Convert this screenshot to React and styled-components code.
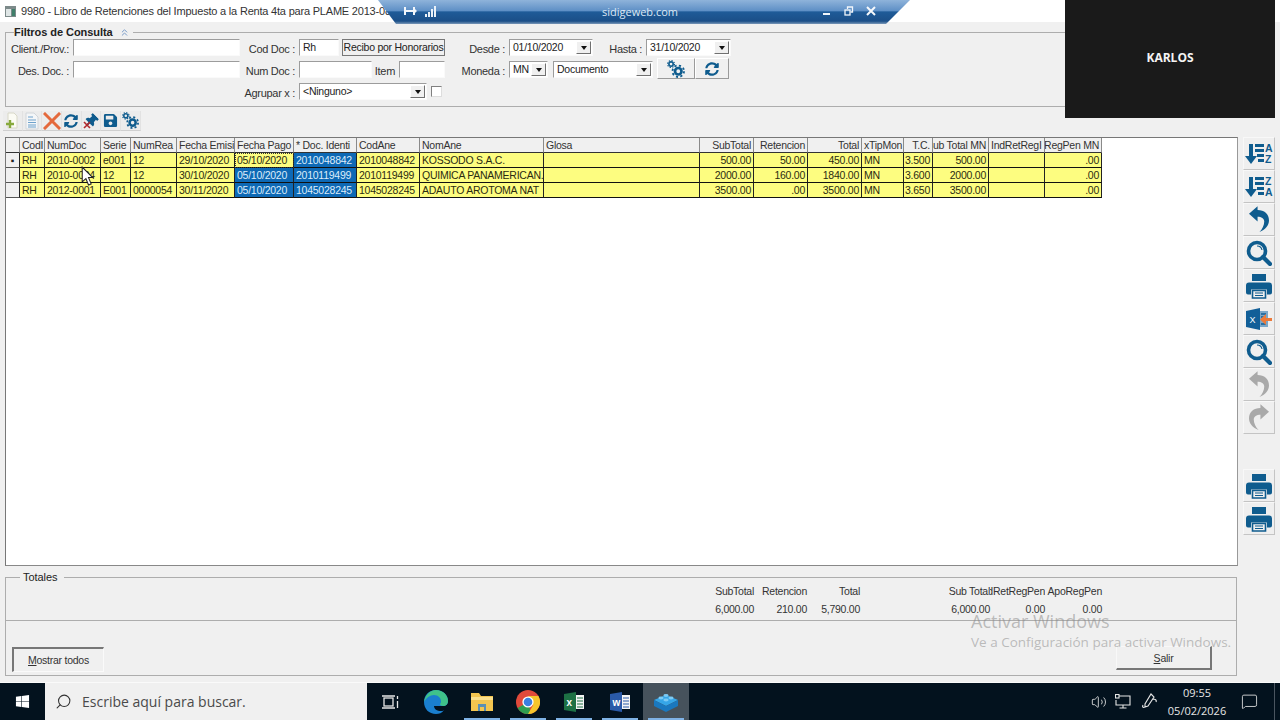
import React from 'react';
import styled, { createGlobalStyle } from 'styled-components';
import { FaSave, FaSyncAlt, FaThumbtack, FaWindows } from 'react-icons/fa';
import { Volume2, MessageSquare, Search, ChevronsUp } from 'lucide-react';

const BLUE = '#0f5c8e';

const GlobalStyle = createGlobalStyle`
  html, body { margin: 0; padding: 0; background: #f0f0f0; }
  * { box-sizing: border-box; }
  body { font-family: "Liberation Sans", Arial, sans-serif; font-size: 10.5px; letter-spacing: -0.25px; color: #222; }
`;

const Page = styled.div`
  position: relative;
  width: 1280px;
  height: 720px;
  overflow: hidden;
  display: flex;
  flex-direction: column;
`;

const TitleBar = styled.div`
  height: 22px;
  flex: none;
  background: #fff;
  display: flex;
  align-items: center;
  gap: 5px;
  padding-left: 5px;
  font-size: 11px;
  letter-spacing: -0.2px;
  color: #333;
  white-space: nowrap;
`;

const RemoteBar = styled.div`
  position: absolute;
  left: 378px;
  top: 0;
  width: 532px;
  height: 24px;
  clip-path: polygon(0 0, 100% 0, calc(100% - 24px) 100%, 18px 100%);
  background: linear-gradient(#8fb3da 0, #5f90c6 44%, #1f5b98 50%, #1b4f88 88%, #7a98b8 100%);
  display: grid;
  grid-template-columns: 1fr auto 1fr;
  align-items: center;
  padding: 0 34px 2px 26px;
  color: #dce8f4;
  font-family: "Open Sans", sans-serif;
  font-size: 11px;
  letter-spacing: 0;
`;

const RemoteGroup = styled.div`
  display: flex;
  align-items: center;
  gap: ${(p) => p.$gap}px;
  justify-content: ${(p) => (p.$end ? 'flex-end' : 'flex-start')};
`;

const VideoTile = styled.div`
  position: absolute;
  left: 1065px;
  top: 0;
  width: 210px;
  height: 118px;
  padding-bottom: 4px;
  background: #1a1a1a;
  color: #f4f4f4;
  font-family: "Open Sans", sans-serif;
  font-weight: 700;
  font-size: 12px;
  letter-spacing: 0;
  display: flex;
  align-items: center;
  justify-content: center;
`;

const Body = styled.div`
  flex: 1;
  min-height: 0;
  padding-left: 5px;
`;

const GroupBox = styled.fieldset`
  margin: ${(p) => p.$top}px 0 0;
  padding: 0;
  width: ${(p) => p.$width}px;
  border: 1px solid #adadad;
  min-width: 0;
`;

const GroupLegend = styled.legend`
  margin-left: ${(p) => p.$indent}px;
  padding: 0 3px 0 0;
  line-height: 14px;
  display: flex;
  align-items: center;
  gap: 6px;
  font-size: 11px;
  letter-spacing: -0.05px;
  font-weight: ${(p) => (p.$bold ? 700 : 400)};
`;

const FormRows = styled.div`
  display: flex;
  flex-direction: column;
  gap: 5px;
  padding-bottom: 6px;
`;

const FormRow = styled.div`
  display: flex;
  align-items: stretch;
  height: 17px;
`;

const FieldLabel = styled.label`
  width: ${(p) => p.$w}px;
  margin-right: 4px;
  text-align: right;
  line-height: 20px;
  font-size: 11px;
  letter-spacing: -0.3px;
  color: #333;
  white-space: nowrap;
`;

const TextField = styled.div`
  width: ${(p) => p.$w}px;
  background: #fff;
  border: 1px solid;
  border-color: #9c9c9c #fafafa #fafafa #9c9c9c;
  padding-left: 3px;
  line-height: 15px;
  margin-left: ${(p) => p.$ml || 0}px;
  display: flex;
  justify-content: space-between;
  align-items: center;
  white-space: nowrap;
`;

const DropArrow = styled.span`
  width: 15px;
  height: 13px;
  margin-right: 1px;
  flex: none;
  background: #f0f0f0;
  border: 1px solid;
  border-color: #fff #707070 #707070 #fff;
  display: flex;
  align-items: center;
  justify-content: center;
  &::after {
    content: '';
    border-left: 3.5px solid transparent;
    border-right: 3.5px solid transparent;
    border-top: 4px solid #111;
  }
`;

const DocButton = styled.div`
  width: 103px;
  margin-left: 3px;
  border: 1px solid #777;
  background: #f0f0f0;
  line-height: 14px;
  text-align: center;
  white-space: nowrap;
  overflow: hidden;
`;

const CheckBox = styled.span`
  width: 11px;
  height: 11px;
  margin: 3px 0 0 4px;
  background: #fff;
  border: 1px solid;
  border-color: #808080 #ddd #ddd #808080;
`;

const ActionButton = styled.div`
  width: ${(p) => p.$w}px;
  height: 21px;
  margin: -3px 0 0 ${(p) => p.$ml}px;
  background: #f0f0f0;
  border: 1px solid;
  border-color: #fff #9a9a9a #9a9a9a #fff;
  display: flex;
  align-items: center;
  justify-content: center;
  color: ${BLUE};
`;

const Toolbar = styled.div`
  display: flex;
  height: 20px;
  margin: 4px 0 6px -2px;
`;

const ToolButton = styled.div`
  width: 19.7px;
  height: 20px;
  display: flex;
  align-items: center;
  justify-content: center;
  color: ${BLUE};
  background: #ececec;
  border-right: 1px solid #e2e2e2;
  border-bottom: 1px solid #cfcfcf;
`;

const Workspace = styled.div`
  display: flex;
  height: 429px;
`;

const GridPanel = styled.div`
  width: 1233px;
  background: #fff;
  border: 1px solid;
  border-color: #777 #999 #888 #777;
`;

const DataTable = styled.table`
  table-layout: fixed;
  border-collapse: separate;
  border-spacing: 0;
  width: 1096px;
`;

const HeadCell = styled.th`
  height: 15px;
  padding: 0;
  font-weight: 400;
  background: #f0f0f0;
  color: #333;
  border-right: 1px solid #8a8a8a;
  border-bottom: 1px solid #333;
  overflow: hidden;
`;

const CellText = styled.div`
  display: flex;
  justify-content: ${(p) => (p.$right ? 'flex-end' : 'flex-start')};
  padding: 0 2px;
  line-height: 14px;
  white-space: nowrap;
  overflow: hidden;
`;

const DataCell = styled.td`
  height: 15px;
  padding: 0;
  background: ${(p) => (p.$selected ? '#0e69b5' : '#fdfd80')};
  color: ${(p) => (p.$selected ? '#dcecfa' : '#2b2b10')};
  border-right: 1px solid #222;
  border-bottom: 1px solid #111;
  overflow: hidden;
  outline: ${(p) => (p.$focus ? '1px dotted #333' : 'none')};
  outline-offset: -1px;
`;

const RowMarker = styled.td`
  height: 15px;
  padding: 0;
  background: #f0f0f0;
  border-right: 1px solid #222;
  border-bottom: 1px solid #555;
  text-align: center;
  line-height: 13px;
  font-size: 10px;
`;

const SideBar = styled.div`
  width: 32px;
  margin-left: 5px;
  display: flex;
  flex-direction: column;
`;

const SideButton = styled.div`
  height: 33px;
  flex: none;
  display: flex;
  align-items: center;
  justify-content: center;
  background: #efefef;
  border: 1px solid;
  border-color: #f8f8f8 #c4c4c4 #c4c4c4 #f8f8f8;
  color: ${(p) => (p.$off ? '#a9a9a9' : BLUE)};
`;

const SideGap = styled.div`
  height: 35px;
  flex: none;
`;

const TotalsGrid = styled.div`
  display: grid;
  grid-template-columns: 748px 53px 53px 130px 55px 57px;
  grid-auto-rows: 14px;
  row-gap: 4px;
  height: 37px;
  border-bottom: 1px solid #adadad;
  color: #333;
`;

const TotalItem = styled.div`
  line-height: 14px;
  white-space: nowrap;
  display: flex;
  justify-content: flex-end;
  overflow: ${(p) => (p.$clip ? 'hidden' : 'visible')};
`;

const TotalsFoot = styled.div`
  height: 54px;
  display: flex;
  justify-content: space-between;
  align-items: flex-end;
  padding: 0 24px 3px 6px;
`;

const FootButton = styled.div`
  width: ${(p) => p.$w}px;
  height: ${(p) => p.$h}px;
  margin-bottom: ${(p) => p.$mb || 0}px;
  border: 1px solid;
  border-width: ${(p) => (p.$raised ? '1px 2px 2px 1px' : '2px 1px 1px 2px')};
  border-color: ${(p) => (p.$raised ? '#f8f8f8 #777 #777 #f8f8f8' : '#777 #fafafa #fafafa #777')};
  background: #f0f0f0;
  display: flex;
  align-items: center;
  justify-content: center;
  color: #333;
  u { text-decoration: underline; }
`;

const Watermark = styled.div`
  position: absolute;
  left: 971px;
  top: 610px;
  font-family: "Open Sans", sans-serif;
  letter-spacing: 0;
  color: rgba(140, 140, 140, 0.55);
  pointer-events: none;
  white-space: nowrap;
`;

const WatermarkTitle = styled.div`
  font-size: 18px;
  line-height: 22px;
`;

const WatermarkText = styled.div`
  font-size: 13.5px;
  line-height: 18px;
  margin-top: 1px;
`;

const Pointer = styled.svg`
  position: absolute;
  left: 81px;
  top: 166px;
`;

const Taskbar = styled.div`
  height: 38px;
  flex: none;
  display: flex;
  align-items: stretch;
  background: #03121e;
  border-top: 1px solid #fafafa;
  color: #e6e6e6;
  font-family: "Open Sans", sans-serif;
  letter-spacing: 0;
`;

const StartButton = styled.div`
  width: 45px;
  display: flex;
  align-items: center;
  justify-content: center;
  color: #fff;
`;

const SearchBox = styled.div`
  width: 322px;
  background: #f0f0f0;
  display: flex;
  align-items: center;
  gap: 10px;
  padding-left: 10px;
  font-size: 14px;
  color: #4a4a4a;
`;

const TaskApp = styled.div`
  position: relative;
  width: 46px;
  display: flex;
  align-items: center;
  justify-content: center;
  background: ${(p) => (p.$active ? '#46525c' : 'transparent')};
  &::after {
    content: '';
    display: ${(p) => (p.$open ? 'block' : 'none')};
    position: absolute;
    left: 5px;
    right: 5px;
    bottom: 0;
    height: 2px;
    background: #7fb2e5;
  }
`;

const Tray = styled.div`
  margin-left: auto;
  display: flex;
  align-items: center;
  padding-right: 5px;
  height: 100%;
`;

const TrayIcon = styled.div`
  width: ${(p) => p.$w}px;
  display: flex;
  align-items: center;
  justify-content: center;
`;

const Clock = styled.div`
  width: 64px;
  text-align: center;
  font-size: 11px;
  line-height: 18px;
`;

const TrayEnd = styled.div`
  width: 6px;
  height: 100%;
  border-right: 1px solid #4a5560;
`;

const columns = [
  { w: 25, title: 'CodI' },
  { w: 56, title: 'NumDoc' },
  { w: 30, title: 'Serie' },
  { w: 46, title: 'NumRea' },
  { w: 58, title: 'Fecha Emisi' },
  { w: 59, title: 'Fecha Pago' },
  { w: 63, title: '* Doc. Identi' },
  { w: 63, title: 'CodAne' },
  { w: 124, title: 'NomAne' },
  { w: 156, title: 'Glosa' },
  { w: 54, title: 'SubTotal', right: true },
  { w: 54, title: 'Retencion', right: true },
  { w: 54, title: 'Total', right: true },
  { w: 42, title: 'xTipMon' },
  { w: 29, title: 'T.C.', right: true },
  { w: 56, title: 'Sub Total MN', right: true },
  { w: 56, title: 'IndRetRegI' },
  { w: 57, title: 'ApoRegPen MN', right: true },
];

const rows = [
  ['RH', '2010-0002', 'e001', '12', '29/10/2020', '05/10/2020', '2010048842', '2010048842', 'KOSSODO S.A.C.', '', '500.00', '50.00', '450.00', 'MN', '3.500', '500.00', '', '.00'],
  ['RH', '2010-0004', '12', '12', '30/10/2020', '05/10/2020', '2010119499', '2010119499', 'QUIMICA PANAMERICAN.', '', '2000.00', '160.00', '1840.00', 'MN', '3.600', '2000.00', '', '.00'],
  ['RH', '2012-0001', 'E001', '0000054', '30/11/2020', '05/10/2020', '1045028245', '1045028245', 'ADAUTO AROTOMA NAT', '', '3500.00', '.00', '3500.00', 'MN', '3.650', '3500.00', '', '.00'],
];

const totals = [
  'SubTotal', 'Retencion', 'Total', 'Sub Total', 'IndRetRegPen', 'ApoRegPen',
  '6,000.00', '210.00', '5,790.00', '6,000.00', '0.00', '0.00',
];

const SortIcon = ({ first, second }) => (
  <svg width="29" height="24" viewBox="0 0 29 24" fill="currentColor">
    <path d="M4 2h4v12h4l-6 8-6-8h4z" />
    <rect x="10" y="2" width="9" height="3" />
    <rect x="10" y="7" width="9" height="3" />
    <rect x="12" y="12" width="7" height="3" />
    <rect x="13" y="17" width="6" height="3" />
    <text x="20" y="10" fontSize="10.5" fontWeight="700" fontFamily="Liberation Sans">{first}</text>
    <text x="20" y="21" fontSize="10.5" fontWeight="700" fontFamily="Liberation Sans">{second}</text>
  </svg>
);

const ReplyIcon = ({ flip }) => (
  <svg width="20" height="29" viewBox="0 0 21 28" fill="currentColor" style={flip ? { transform: 'scaleX(-1)' } : undefined}>
    <path d="M9 0 0 8l9 8v-5c4 0 7 2 7 5 0 4-2 8-5 11 6-2 10-7 10-12C21 8 16 4 9 4z" />
  </svg>
);

const MagnifierIcon = () => (
  <svg width="26" height="26" viewBox="0 0 26 26" fill="none" stroke="currentColor">
    <circle cx="11" cy="11" r="8.5" strokeWidth="3.6" />
    <path d="M17 17l7 7" strokeWidth="4.2" strokeLinecap="round" />
    <path d="M11 6a5 5 0 0 1 5 4" strokeWidth="1.2" />
  </svg>
);

const PrintIcon = () => (
  <svg width="26" height="26" viewBox="0 0 26 26" fill="currentColor">
    <path d="M6 1h14v7H6z" />
    <path d="M3 9.500h20a3 3 0 0 1 3 3v7a2 2 0 0 1-2 2h-3v-5H5v5H2a2 2 0 0 1-2-2v-7a3 3 0 0 1 3-3z" />
    <path d="M6.500 17.500h13v7.500h-13z" fill="#efefef" stroke="currentColor" strokeWidth="1.600" />
    <path d="M9 20h8M9 22.500h8" stroke="currentColor" strokeWidth="1.200" />
  </svg>
);

const ExcelExportIcon = () => (
  <svg width="26" height="24" viewBox="0 0 26 24">
    <path d="M0 4 14 1v22L0 20z" fill="#125f98" />
    <path d="M14 4h8v16h-8z" fill="#7aa7c9" />
    <path d="M15 7h5M15 10h5M15 17h5" stroke="#125f98" strokeWidth="1.500" />
    <text x="3.500" y="16" fontSize="9" fontFamily="Liberation Sans" fill="#fff">X</text>
    <path d="M26 11v3h-6v4l-6-5.500 6-5.500v4z" fill="#ec7a3a" />
  </svg>
);

const GearsIcon = ({ size }) => (
  <svg width={size} height={size} viewBox="0 0 20 20" fill="none" stroke="currentColor">
    <circle cx="4.500" cy="4.500" r="2.400" strokeWidth="1.800" />
    <circle cx="4.500" cy="4.500" r="3.900" strokeWidth="1.200" strokeDasharray="1.500 1.560" />
    <circle cx="12.500" cy="12.500" r="3.600" strokeWidth="3" />
    <circle cx="12.500" cy="12.500" r="6.400" strokeWidth="2" strokeDasharray="2.400 2.620" />
  </svg>
);

const NewDocIcon = () => (
  <svg width="16" height="18" viewBox="0 0 16 18">
    <path d="M4 1h6l3 3v12H4z" fill="#fbfbf4" stroke="#d8d8c8" />
    <path d="M2 12h8M6 8v8" stroke="#87a93c" strokeWidth="2.400" />
  </svg>
);

const ListDocIcon = () => (
  <svg width="14" height="18" viewBox="0 0 14 18">
    <path d="M1 1h8l4 4v12H1z" fill="#f4f6f8" stroke="#d2d6da" />
    <path d="M3 5h5M3 8h8M3 10.500h8M3 13h8M3 15h8" stroke="#6ea2cc" strokeWidth="1.200" />
  </svg>
);

const CrossIcon = () => (
  <svg width="18" height="18" viewBox="0 0 18 18" stroke="#e4693c" strokeWidth="3" strokeLinecap="square">
    <path d="M2 2l14 14M16 2 2 16" />
  </svg>
);

const PinIcon = () => (
  <span style={{ display: 'flex', position: 'relative' }}>
    <FaThumbtack size={14} style={{ transform: 'rotate(45deg)' }} />
    <svg width="8" height="8" viewBox="0 0 8 8" stroke="#b0282c" strokeWidth="1.600" style={{ position: 'absolute', left: -1, bottom: -1 }}>
      <path d="M1 1l6 6M7 1 1 7" />
    </svg>
  </span>
);

const WindowIcon = () => (
  <svg width="11" height="11" viewBox="0 0 11 11">
    <rect width="11" height="11" fill="#7d8a8a" />
    <rect x="1" y="3" width="5" height="7" fill="#dfe6e6" />
    <rect x="7" y="3" width="3" height="7" fill="#3f7f6a" />
  </svg>
);

const PinGlyph = () => (
  <svg width="13" height="8" viewBox="0 0 13 8" fill="#f2f6fb">
    <path d="M0 0h2v8H0zM9 0h2v8H9zM2 3h7v2H2zM11 2l2 2-2 2z" />
  </svg>
);

const SignalGlyph = () => (
  <svg width="12" height="11" viewBox="0 0 12 11" fill="#eaf1f8">
    <rect x="0" y="8" width="2" height="3" />
    <rect x="3" y="6" width="2" height="5" />
    <rect x="6" y="3" width="2" height="8" />
    <rect x="9" y="0" width="2" height="11" />
  </svg>
);

const MinimizeGlyph = () => (
  <svg width="10" height="10" viewBox="0 0 10 10" fill="#f2f6fb"><rect x="1" y="7" width="7" height="2" /></svg>
);

const RestoreGlyph = () => (
  <svg width="10" height="10" viewBox="0 0 10 10" fill="none" stroke="#f2f6fb" strokeWidth="1.300">
    <rect x="1" y="4" width="5" height="5" />
    <path d="M3.500 3V1h5v5H6.500" />
  </svg>
);

const CloseGlyph = () => (
  <svg width="10" height="10" viewBox="0 0 10 10" stroke="#f6f9fc" strokeWidth="2">
    <path d="M1 1l8 8M9 1 1 9" />
  </svg>
);

const TaskViewIcon = () => (
  <svg width="17" height="14" viewBox="0 0 17 14" fill="none" stroke="#e6e6e6" strokeWidth="1.300">
    <rect x="2" y="3" width="9" height="8" />
    <path d="M0 1h13M0 13h13M15.500 1v3M15.500 6v7" />
  </svg>
);

const EdgeIcon = () => (
  <svg width="24" height="24" viewBox="0 0 24 24">
    <path d="M12 0c7 0 12 5 12 11 0 3-2 5-5 5H10c0 3 3 5 7 5 1 0 2 0 3-1-2 3-5 4-8 4C5 24 0 19 0 12 0 5 5 0 12 0z" fill="#1a7fcf" />
    <path d="M12 0c7 0 12 5 12 11 0 3-2 5-5 5-2 0-3-1-3-2 1-1 1-2 1-3 0-3-3-6-7-6-4 0-8 3-10 7C1 5 6 0 12 0z" fill="#3fc28a" />
  </svg>
);

const FolderIcon = () => (
  <svg width="22" height="20" viewBox="0 0 22 20">
    <path d="M0 1h8l2 3h12v15H0z" fill="#f3c550" />
    <path d="M0 5h22v3H0z" fill="#fbe08d" />
    <path d="M7 12h8v7h-2v-4H9v4H7z" fill="#5b8fb4" />
  </svg>
);

const ChromeIcon = () => (
  <svg width="24" height="24" viewBox="0 0 24 24">
    <circle cx="12" cy="12" r="12" fill="#e04a3b" />
    <path d="M12 12 1.600 18A12 12 0 0 0 12 24c1 0 2-.1 3-.4z" fill="#2f9e4f" />
    <path d="M12 6h10.400A12 12 0 0 1 12 24l5.200-9z" fill="#f6c52c" />
    <circle cx="12" cy="12" r="5.600" fill="#fff" />
    <circle cx="12" cy="12" r="4.300" fill="#3b7fe0" />
  </svg>
);

const OfficeIcon = ({ tone, letter }) => (
  <svg width="21" height="20" viewBox="0 0 21 20">
    <path d="M0 2 12 0v20L0 18z" fill={tone} />
    <path d="M12 3h8v14h-8z" fill="#f4f4f4" />
    <path d="M13 6h6M13 9h6M13 12h6M13 15h6" stroke={tone} strokeWidth="1.200" />
    <text x="2.500" y="14" fontSize="10" fontWeight="700" fontFamily="Liberation Sans" fill="#fff">{letter}</text>
  </svg>
);

const BlockIcon = () => (
  <svg width="24" height="20" viewBox="0 0 24 20">
    <path d="M12 3 24 8l-12 6L0 8z" fill="#36a6e8" />
    <path d="M0 8l12 6v6L0 14zM24 8l-12 6v6l12-6z" fill="#1a78bf" />
    <ellipse cx="7" cy="6" rx="2.600" ry="1.400" fill="#7ccaf4" />
    <ellipse cx="12" cy="3.500" rx="2.600" ry="1.400" fill="#7ccaf4" />
    <ellipse cx="12" cy="8" rx="2.600" ry="1.400" fill="#7ccaf4" />
    <ellipse cx="17" cy="6" rx="2.600" ry="1.400" fill="#7ccaf4" />
  </svg>
);

const NetworkIcon = () => (
  <svg width="16" height="15" viewBox="0 0 16 15" fill="none" stroke="#e6e6e6" strokeWidth="1.100">
    <path d="M4 2h11v9H1V6M8 11v3M4.500 14h7" />
    <rect x="0.500" y="0.500" width="3.500" height="3.500" />
  </svg>
);

const PenIcon = () => (
  <svg width="16" height="17" viewBox="0 0 16 17" fill="none" stroke="#e6e6e6" strokeWidth="1.100">
    <path d="M9 1l3 3-6 9-3 1 0-3zM11 6c2 0 4 1 3 3M3 14c-2 1-3 0-2-2" />
  </svg>
);

const App = () => (
  <Page>
    <GlobalStyle />
    <TitleBar>
      <WindowIcon />
      <span>9980 - Libro de Retenciones del Impuesto a la Renta 4ta para PLAME 2013-08</span>
    </TitleBar>

    <Body>
      <GroupBox $top={3} $width={1270}>
        <GroupLegend $indent={8} $bold>
          Filtros de Consulta
          <ChevronsUp size={11} color="#6d93c4" strokeWidth={2} />
        </GroupLegend>
        <FormRows>
          <FormRow>
            <FieldLabel $w={63}>Client./Prov.:</FieldLabel>
            <TextField $w={167} />
            <FieldLabel $w={55}>Cod Doc :</FieldLabel>
            <TextField $w={40}>Rh</TextField>
            <DocButton>Recibo por Honorarios</DocButton>
            <FieldLabel $w={60}>Desde :</FieldLabel>
            <TextField $w={84}>01/10/2020<DropArrow /></TextField>
            <FieldLabel $w={49}>Hasta :</FieldLabel>
            <TextField $w={85}>31/10/2020<DropArrow /></TextField>
          </FormRow>
          <FormRow>
            <FieldLabel $w={63}>Des. Doc. :</FieldLabel>
            <TextField $w={167} />
            <FieldLabel $w={55}>Num Doc :</FieldLabel>
            <TextField $w={73} />
            <FieldLabel $w={23}>Item</FieldLabel>
            <TextField $w={46} />
            <FieldLabel $w={60}>Moneda :</FieldLabel>
            <TextField $w={39}>MN<DropArrow /></TextField>
            <TextField $w={100} $ml={5}>Documento<DropArrow /></TextField>
            <ActionButton $w={38} $ml={4}><GearsIcon size={18} /></ActionButton>
            <ActionButton $w={34} $ml={0}><FaSyncAlt size={14} /></ActionButton>
          </FormRow>
          <FormRow>
            <FieldLabel $w={289}>Agrupar x :</FieldLabel>
            <TextField $w={128}>&lt;Ninguno&gt;<DropArrow /></TextField>
            <CheckBox />
          </FormRow>
        </FormRows>
      </GroupBox>

      <Toolbar>
        <ToolButton><NewDocIcon /></ToolButton>
        <ToolButton><ListDocIcon /></ToolButton>
        <ToolButton><CrossIcon /></ToolButton>
        <ToolButton><FaSyncAlt size={14} /></ToolButton>
        <ToolButton><PinIcon /></ToolButton>
        <ToolButton><FaSave size={15} /></ToolButton>
        <ToolButton><GearsIcon size={17} /></ToolButton>
      </Toolbar>

      <Workspace>
        <GridPanel>
          <DataTable>
            <colgroup>
              <col style={{ width: 14 }} />
              {columns.map((col) => <col key={col.title} style={{ width: col.w }} />)}
            </colgroup>
            <thead>
              <tr>
                <HeadCell />
                {columns.map((col) => (
                  <HeadCell key={col.title}>
                    <CellText $right={col.right}>{col.title}</CellText>
                  </HeadCell>
                ))}
              </tr>
            </thead>
            <tbody>
              {rows.map((row, r) => (
                <tr key={row[1]}>
                  <RowMarker>{r === 0 ? '▪' : ''}</RowMarker>
                  {row.map((value, c) => (
                    <DataCell
                      key={c}
                      $selected={c === 6 || (c === 5 && r > 0)}
                      $focus={c === 5 && r === 0}
                    >
                      <CellText $right={columns[c].right}>{value}</CellText>
                    </DataCell>
                  ))}
                </tr>
              ))}
            </tbody>
          </DataTable>
        </GridPanel>

        <SideBar>
          <SideButton><SortIcon first="A" second="Z" /></SideButton>
          <SideButton><SortIcon first="Z" second="A" /></SideButton>
          <SideButton><ReplyIcon /></SideButton>
          <SideButton><MagnifierIcon /></SideButton>
          <SideButton><PrintIcon /></SideButton>
          <SideButton><ExcelExportIcon /></SideButton>
          <SideButton><MagnifierIcon /></SideButton>
          <SideButton $off><ReplyIcon /></SideButton>
          <SideButton $off><ReplyIcon flip /></SideButton>
          <SideGap />
          <SideButton><PrintIcon /></SideButton>
          <SideButton><PrintIcon /></SideButton>
        </SideBar>
      </Workspace>

      <GroupBox $top={4} $width={1232}>
        <GroupLegend $indent={14}>&nbsp;Totales&nbsp;</GroupLegend>
        <TotalsGrid>
          {totals.map((value, i) => (
            <TotalItem key={i} $clip={value === 'IndRetRegPen'}>{value}</TotalItem>
          ))}
        </TotalsGrid>
        <TotalsFoot>
          <FootButton $w={92} $h={25}><span><u>M</u>ostrar todos</span></FootButton>
          <FootButton $w={96} $h={24} $mb={2} $raised><span><u>S</u>alir</span></FootButton>
        </TotalsFoot>
      </GroupBox>
    </Body>

    <Taskbar>
      <StartButton><FaWindows size={15} /></StartButton>
      <SearchBox>
        <Search size={17} color="#333" strokeWidth={1.5} style={{ transform: 'scaleX(-1)' }} />
        Escribe aquí para buscar.
      </SearchBox>
      <TaskApp><TaskViewIcon /></TaskApp>
      <TaskApp><EdgeIcon /></TaskApp>
      <TaskApp $open><FolderIcon /></TaskApp>
      <TaskApp $open><ChromeIcon /></TaskApp>
      <TaskApp $open><OfficeIcon tone="#1d7044" letter="x" /></TaskApp>
      <TaskApp $open><OfficeIcon tone="#2a5aa8" letter="w" /></TaskApp>
      <TaskApp $open $active><BlockIcon /></TaskApp>
      <Tray>
        <TrayIcon $w={24}><Volume2 size={16} strokeWidth={1.3} /></TrayIcon>
        <TrayIcon $w={24}><NetworkIcon /></TrayIcon>
        <TrayIcon $w={30}><PenIcon /></TrayIcon>
        <Clock>09:55<br />05/02/2026</Clock>
        <TrayIcon $w={40}><MessageSquare size={17} strokeWidth={1.2} /></TrayIcon>
        <TrayEnd />
      </Tray>
    </Taskbar>

    <RemoteBar>
      <RemoteGroup $gap={8}><PinGlyph /><SignalGlyph /></RemoteGroup>
      <span>sidigeweb.com</span>
      <RemoteGroup $gap={12} $end><MinimizeGlyph /><RestoreGlyph /><CloseGlyph /></RemoteGroup>
    </RemoteBar>
    <VideoTile>KARLOS</VideoTile>
    <Watermark>
      <WatermarkTitle>Activar Windows</WatermarkTitle>
      <WatermarkText>Ve a Configuración para activar Windows.</WatermarkText>
    </Watermark>
    <Pointer width="14" height="20" viewBox="0 0 13 19">
      <path d="M1 1v14l3.500-3 2.500 6 2.500-1-2.500-6H11z" fill="#fff" stroke="#222" strokeWidth="1" />
    </Pointer>
  </Page>
);

export default App;
